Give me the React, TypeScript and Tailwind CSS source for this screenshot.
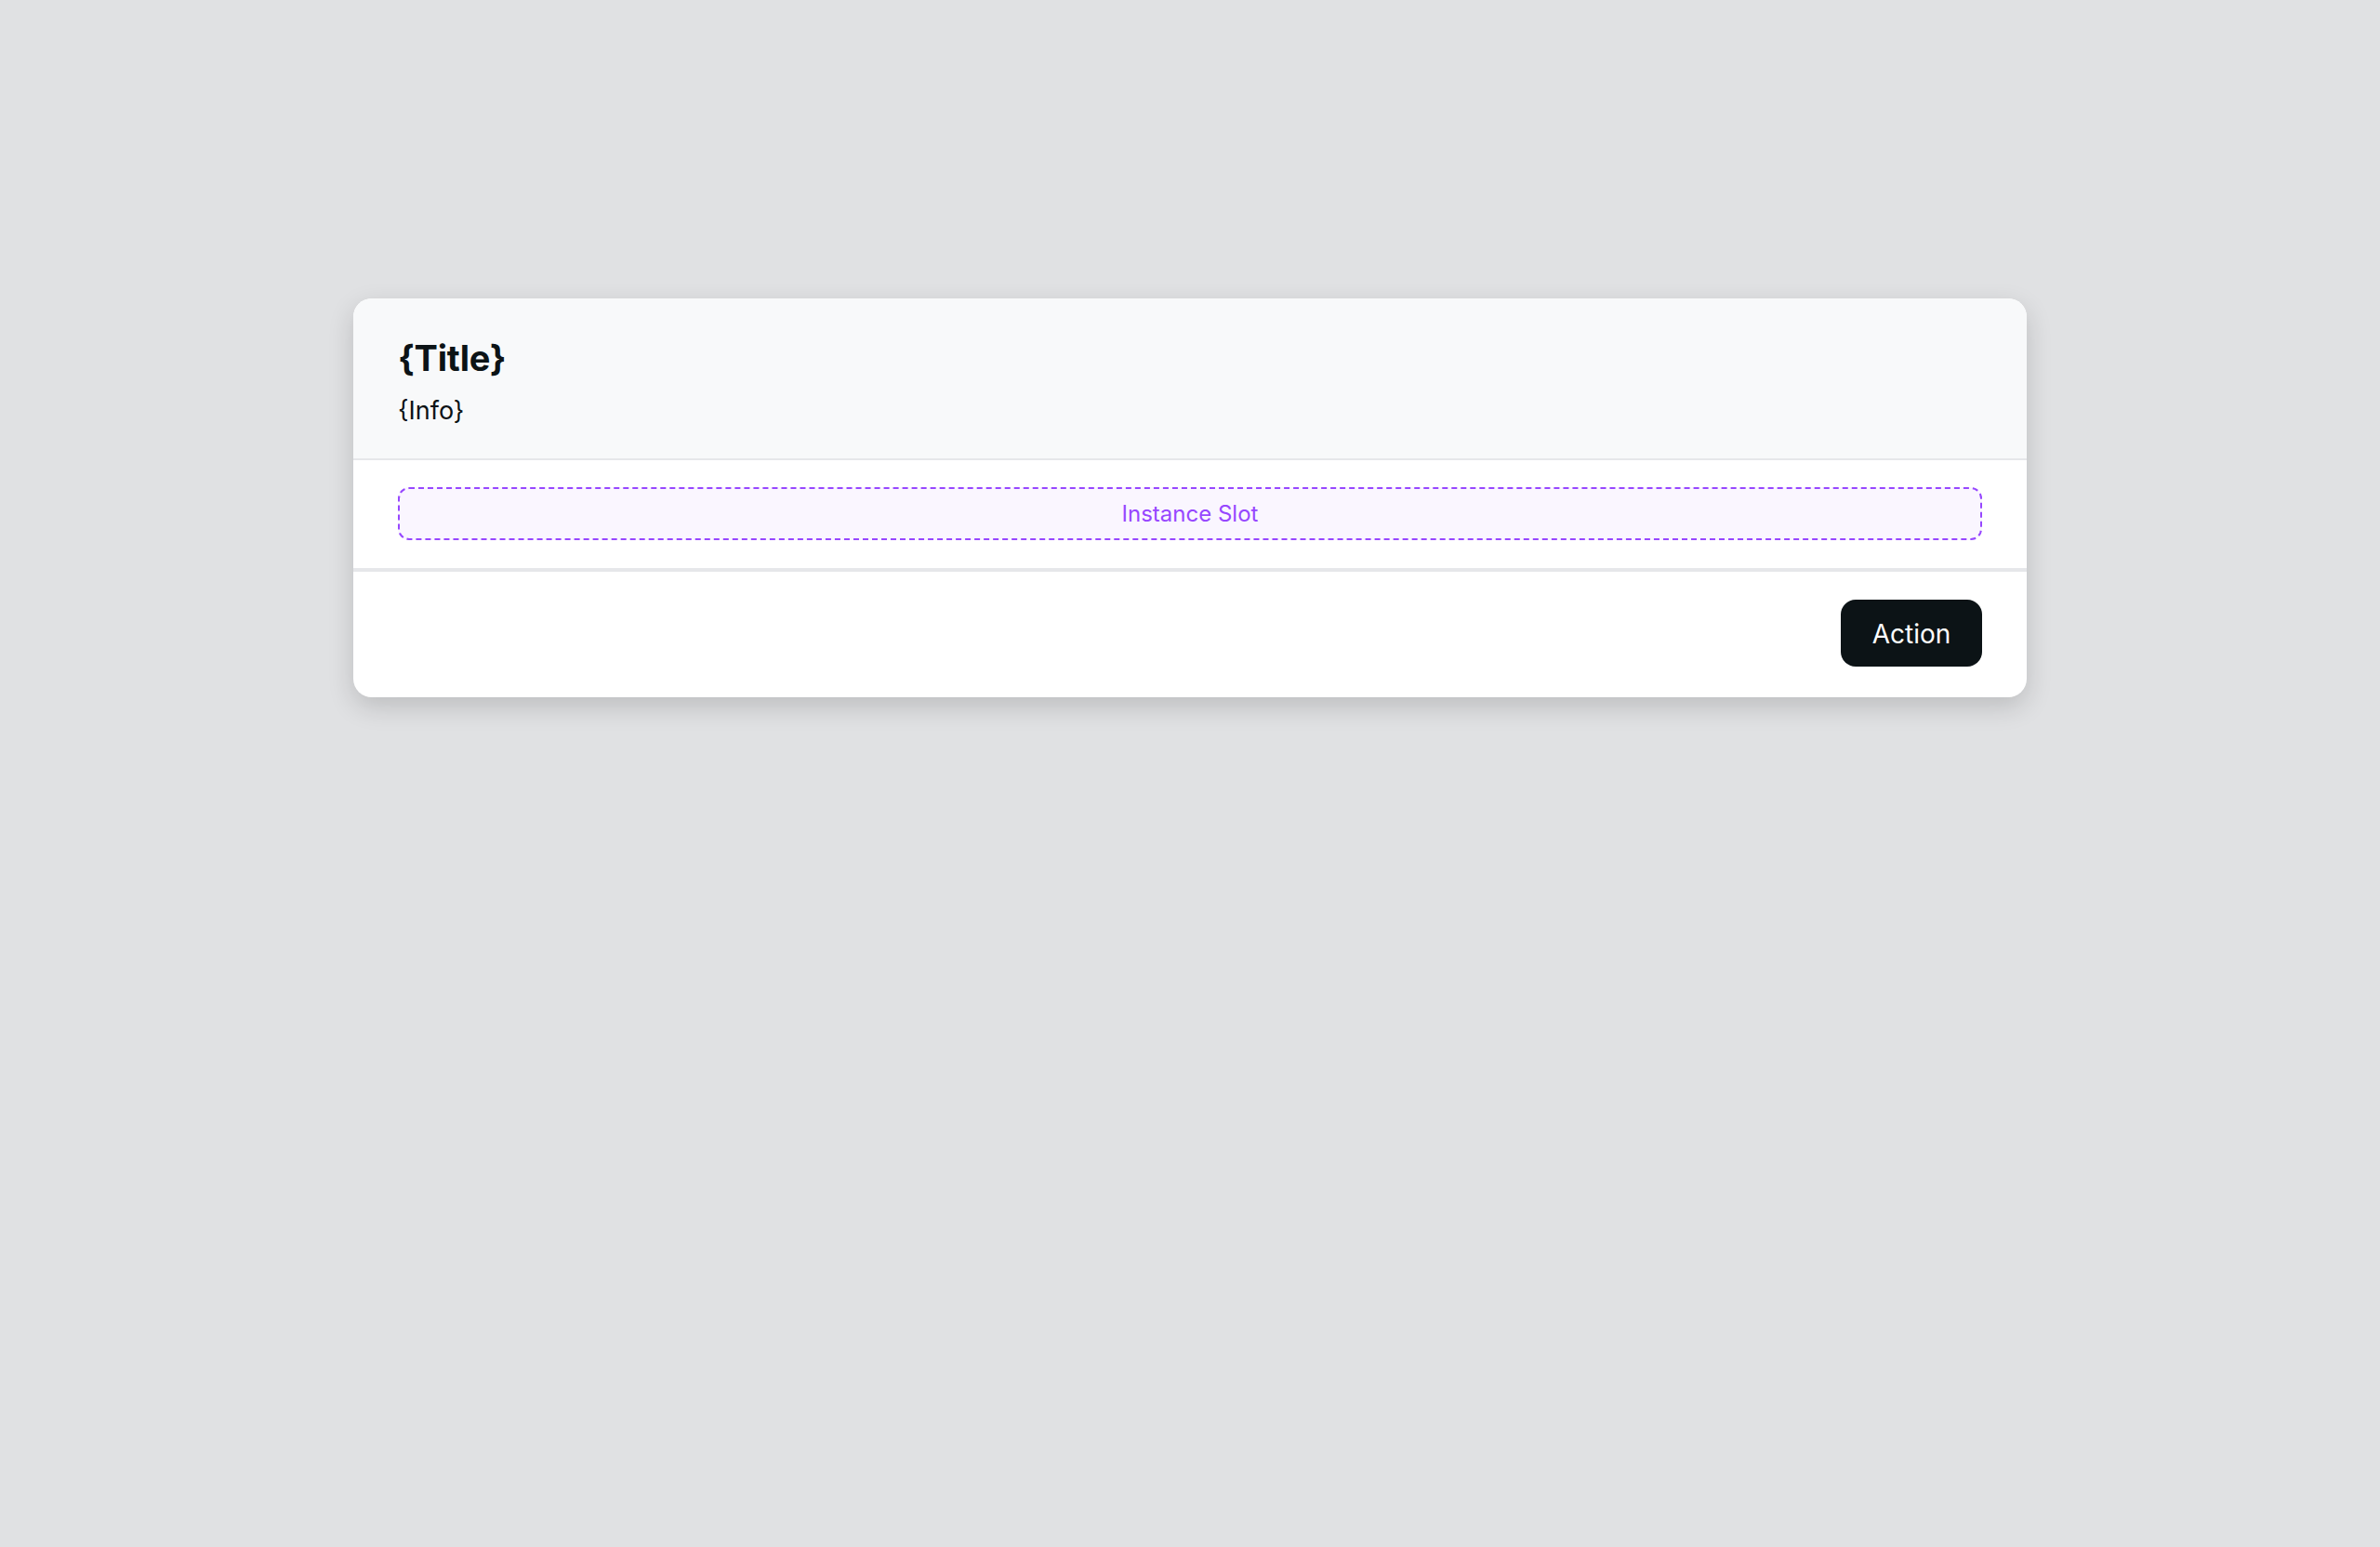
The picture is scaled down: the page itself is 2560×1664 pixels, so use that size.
export default function App() {
  return (
    <div
      className="min-h-screen w-full bg-[#e0e1e3] pt-[321px]"
      style={{ fontFamily: 'Inter, "Noto Sans", sans-serif' }}
    >
      <div className="mx-auto w-[1800px] overflow-hidden rounded-[20px] bg-white shadow-[0_10px_28px_rgba(0,0,0,0.16)]">
        <div className="border-b-2 border-[#e6e7ea] bg-[#f8f9fa] px-12 pb-[33px] pt-10">
          <div className="text-[38px] font-bold leading-[48px] tracking-[-0.2px] text-[#0c1316]">{'{Title}'}</div>
          <div className="mt-[15px] text-[27px] leading-[36px] text-[#0c1316]">{'{Info}'}</div>
        </div>
        <div className="border-b-4 border-[#e6e7ea] px-12 pb-[30px] pt-[29px]">
          <div className="flex h-[57px] items-center justify-center rounded-xl border-2 border-dashed border-[#9747ff] bg-[#faf6ff] text-[24px] text-[#9747ff]">
            Instance Slot
          </div>
        </div>
        <div className="flex justify-end px-12 pb-[33px] pt-[30px]">
          <button className="flex h-[72px] w-[152px] items-center justify-center rounded-2xl bg-[#0c1316] pt-[2px] text-[28px] text-white">
            Action
          </button>
        </div>
      </div>
    </div>
  );
}
